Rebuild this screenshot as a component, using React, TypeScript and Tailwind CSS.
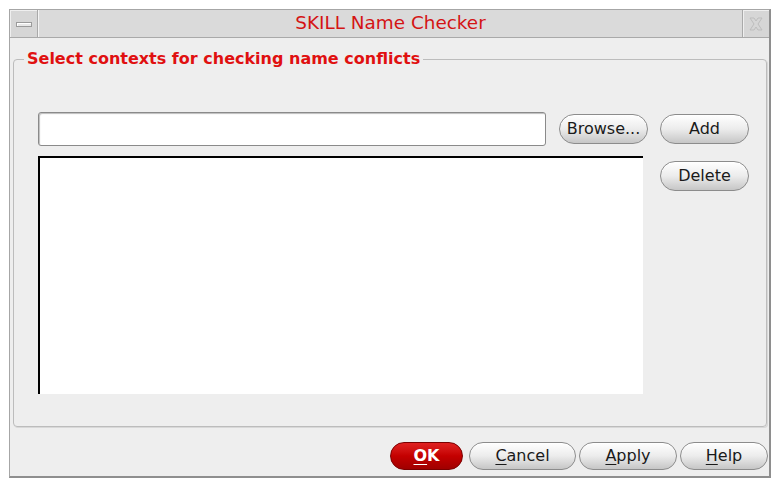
import React from "react";

const btn =
  "flex items-center justify-center rounded-full border border-[#8c8c8c] bg-gradient-to-b from-[#ffffff] via-[#ececec] to-[#c6c6c6] text-[16px] leading-none text-[#1a1a1a] shadow-[inset_0_1px_0_#ffffff]";

export default function App() {
  return (
    <div className="w-[784px] h-[488px] bg-white pl-[9px] pt-[9px] font-['DejaVu_Sans',sans-serif]">
      <div className="w-[762px] h-[469px] flex flex-col border-l border-t border-[#a6a6a6] border-r-2 border-b-2 border-r-[#8e8e8e] border-b-[#8e8e8e] bg-[#eeeeee]">
        {/* title bar */}
        <div className="h-[28px] flex shrink-0 bg-[#dadada] border-b border-b-[#a9a9a9]">
          <div className="w-[28px] flex items-center justify-center border-r border-r-[#a9a9a9] shadow-[inset_1px_1px_0_#efefef] bg-[#d6d6d6]">
            <div className="w-[16px] h-[5px] mt-[2px] border border-[#9a9a9a] bg-[#e8e8e8] shadow-[inset_1px_1px_0_#ffffff]" />
          </div>
          <div className="flex-1 flex items-center justify-center border-l border-l-[#f4f4f4] text-[18.4px] text-[#d41414] leading-none">
            SKILL Name Checker
          </div>
          <div className="w-[27px] flex items-center justify-center border-l border-l-[#a9a9a9] shadow-[inset_1px_1px_0_#efefef] bg-[#d6d6d6]">
            <svg width="16" height="16" viewBox="0 0 16 16" fill="none" stroke="#bdbdbd" strokeWidth="1">
              <path d="M2 2 L6 2 L8 5 L10 2 L14 2 L10 8 L14 14 L10 14 L8 11 L6 14 L2 14 L6 8 Z" />
            </svg>
          </div>
        </div>

        {/* body */}
        <div className="flex-1 flex flex-col pl-[3px] pr-[2px] pt-[12px]">
          <fieldset className="h-[377px] border border-[#bcbcbc] rounded-[4px] shadow-[1px_1px_0_#d8d8d8]">
            <legend className="ml-[10px] px-[3px] text-[16px] leading-[18px] font-bold text-[#e01010]">
              Select contexts for checking name conflicts
            </legend>
            <div className="flex pt-[44px] pl-[24px]">
              <div className="w-[610px] flex flex-col">
                <div className="flex items-center h-[34px]">
                  <div className="w-[508px] h-[34px] bg-white border border-[#8a8a8a] rounded-[3px] shadow-[inset_1px_1px_1px_#bdbdbd]" />
                  <button className={`${btn} ml-[13px] w-[89px] h-[30px]`}>Browse...</button>
                </div>
                <div className="mt-[10px] w-[605px] h-[238px] bg-white border-l-2 border-t-2 border-black" />
              </div>
              <div className="ml-[12px] flex flex-col">
                <button className={`${btn} mt-[2px] w-[89px] h-[30px]`}>Add</button>
                <button className={`${btn} mt-[17px] w-[89px] h-[30px]`}>Delete</button>
              </div>
            </div>
          </fieldset>

          <div className="mt-[15px] flex justify-end -mr-[1px]">
            <button className="w-[73px] h-[28px] flex items-center justify-center rounded-full border border-[#7a0000] bg-gradient-to-b from-[#e02020] via-[#c40000] to-[#a00000] text-white font-bold text-[16px] leading-none">
              <span className="underline underline-offset-[3px]">O</span>K
            </button>
            <button className={`${btn} ml-[6px] w-[107px] h-[28px]`}>
              <span className="underline underline-offset-[3px]">C</span>ancel
            </button>
            <button className={`${btn} ml-[3px] w-[98px] h-[28px]`}>
              <span className="underline underline-offset-[3px]">A</span>pply
            </button>
            <button className={`${btn} ml-[3px] w-[88px] h-[28px]`}>
              <span className="underline underline-offset-[3px]">H</span>elp
            </button>
          </div>
        </div>
      </div>
    </div>
  );
}
